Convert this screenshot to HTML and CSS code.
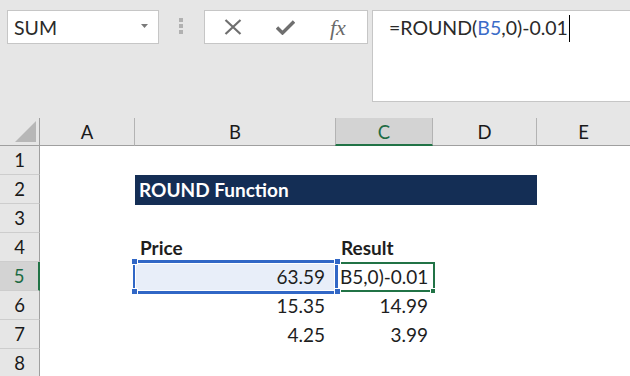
FILE: index.html
```html
<!DOCTYPE html>
<html>
<head>
<meta charset="utf-8">
<link rel="stylesheet" href="styles.css">
</head>
<body>
<div class="app">
  <div class="toolbar">
    <div class="namebox">
      <span class="nb-text">SUM</span>
      <svg class="nb-arrow" width="7" height="4" viewBox="0 0 7 4"><polygon points="0,0 7,0 3.5,4" fill="#7a7a7a"/></svg>
    </div>
    <div class="grip"><i></i><i></i><i></i></div>
    <div class="fbuttons">
      <svg class="ic-x" width="18" height="16" viewBox="0 0 18 16"><path d="M1.5 1 L16.5 15 M16.5 1 L1.5 15" stroke="#6f6f6f" stroke-width="2.2" fill="none"/></svg>
      <svg class="ic-check" width="19" height="15" viewBox="0 0 19 15"><path d="M1 7.5 L6.5 13 L18 1.5" stroke="#6f6f6f" stroke-width="3.4" fill="none"/></svg>
      <span class="ic-fx">fx</span>
    </div>
    <div class="formula">
      <span class="ftext">=ROUND(<span class="ref">B5</span>,0)-0.01</span><span class="caret"></span>
    </div>
  </div>
  <div class="sheet">
    <div class="corner"><span class="tri"></span></div>
    <div class="ch">A</div>
    <div class="ch">B</div>
    <div class="ch ch-sel">C</div>
    <div class="ch">D</div>
    <div class="ch ch-last">E</div>

    <div class="rh">1</div>
    <div class="cell"></div><div class="cell"></div><div class="cell"></div><div class="cell"></div><div class="cell"></div>

    <div class="rh">2</div>
    <div class="cell"></div>
    <div class="cell band">ROUND Function</div>
    <div class="cell"></div>

    <div class="rh">3</div>
    <div class="cell"></div><div class="cell"></div><div class="cell"></div><div class="cell"></div><div class="cell"></div>

    <div class="rh">4</div>
    <div class="cell"></div>
    <div class="cell bold">Price</div>
    <div class="cell bold">Result</div>
    <div class="cell"></div><div class="cell"></div>

    <div class="rh rh-sel">5</div>
    <div class="cell"></div>
    <div class="cell num colb b5">63.59
      <span class="sel"></span>
      <span class="h h-tl"></span><span class="h h-bl"></span><span class="h h-tr"></span><span class="h h-br"></span>
    </div>
    <div class="cell c5">B5,0)-0.01<span class="act"></span><span class="ah"></span></div>
    <div class="cell"></div><div class="cell"></div>

    <div class="rh">6</div>
    <div class="cell"></div>
    <div class="cell num colb">15.35</div>
    <div class="cell num">14.99</div>
    <div class="cell"></div><div class="cell"></div>

    <div class="rh">7</div>
    <div class="cell"></div>
    <div class="cell num colb">4.25</div>
    <div class="cell num">3.99</div>
    <div class="cell"></div><div class="cell"></div>

    <div class="rh">8</div>
    <div class="cell"></div><div class="cell"></div><div class="cell"></div><div class="cell"></div><div class="cell"></div>
  </div>
</div>
</body>
</html>
```
FILE: styles.css
```css
html, body {
  margin: 0;
  padding: 0;
}
body {
  width: 630px;
  height: 376px;
  overflow: hidden;
  background: #e6e6e6;
  font-family: Lato, "Open Sans", sans-serif;
  color: #1e1e1e;
}
.app {
  width: 630px;
}
.toolbar {
  height: 118px;
  box-sizing: border-box;
  padding: 10px 0 0 7px;
  display: flex;
  align-items: flex-start;
}
.namebox {
  width: 152px;
  height: 34px;
  box-sizing: border-box;
  background: #fff;
  border: 1px solid #c6c6c6;
  display: flex;
  align-items: center;
  padding: 0 10px 0 6px;
}
.nb-text {
  flex: 1;
  font-size: 19.5px;
  color: #2a2a2a;
  padding-top: 1px;
}
.nb-arrow {
  display: block;
  margin-top: -2px;
}
.grip {
  width: 4px;
  margin: 8px 21px 0 20px;
  display: flex;
  flex-direction: column;
  gap: 2px;
}
.grip i {
  display: block;
  width: 4px;
  height: 4px;
  background: #b1b1b1;
}
.fbuttons {
  width: 164px;
  height: 34px;
  box-sizing: border-box;
  background: #fff;
  border: 1px solid #c6c6c6;
  display: flex;
  align-items: center;
  padding-left: 19px;
}
.ic-x {
  display: block;
}
.ic-check {
  display: block;
  margin-left: 34px;
  margin-top: 1px;
}
.ic-fx {
  margin-left: 35px;
  font-family: "Liberation Serif", serif;
  font-style: italic;
  font-size: 22px;
  color: #6a6a6a;
  margin-top: 1px;
}
.formula {
  margin-left: 4px;
  flex: 1;
  height: 92px;
  box-sizing: border-box;
  background: #fff;
  border: 1px solid #c6c6c6;
  border-right: none;
  padding: 2px 0 0 16px;
  display: flex;
  align-items: flex-start;
}
.ftext {
  font-size: 19.5px;
  line-height: 30px;
  color: #2a2a2a;
  white-space: nowrap;
}
.ref {
  color: #3b6cc8;
}
.caret {
  display: block;
  width: 1px;
  height: 27px;
  background: #000;
  margin-left: 1px;
  margin-top: 2px;
}
.sheet {
  display: grid;
  grid-template-columns: 40px 95px 201px 97px 104px 93px;
  grid-template-rows: 28px repeat(8, 29px);
  background: #fff;
}
.corner {
  background: #e6e6e6;
  border-right: 1px solid #9f9f9f;
  border-bottom: 1px solid #9f9f9f;
  position: relative;
}
.tri {
  position: absolute;
  right: 3px;
  bottom: 3px;
  width: 0;
  height: 0;
  border-left: 21px solid transparent;
  border-bottom: 21px solid #b7b7b7;
}
.ch {
  background: #e6e6e6;
  border-right: 1px solid #b3b3b3;
  border-bottom: 1px solid #9f9f9f;
  display: flex;
  align-items: center;
  justify-content: center;
  font-size: 18.5px;
  color: #1a1a1a;
  padding-top: 1px;
  box-sizing: border-box;
}
.ch-last {
  border-right: none;
}
.ch-sel {
  background: #d3d3d3;
  border-left: 1px solid #b3b3b3;
  margin-left: -1px;
  border-bottom: 2px solid #217346;
  color: #1d6b43;
  padding-top: 2px;
}
.rh {
  background: #e6e6e6;
  border-right: 1px solid #9f9f9f;
  border-bottom: 1px solid #cdcdcd;
  display: flex;
  align-items: center;
  justify-content: center;
  font-size: 18.5px;
  color: #1a1a1a;
  box-sizing: border-box;
}
.rh-sel {
  background: #d3d3d3;
  border-right: 2px solid #217346;
  color: #1d6b43;
}
.cell {
  font-size: 19px;
  line-height: 29px;
  padding: 0 5px 0 5px;
  white-space: nowrap;
  box-sizing: border-box;
}
.band {
  grid-column: span 3;
  background: #142e55;
  color: #fff;
  font-weight: bold;
  padding-left: 4px;
  height: 30px;
}
.bold {
  font-weight: bold;
}
.num {
  text-align: right;
}
.colb {
  padding-right: 11px;
}
.b5 {
  position: relative;
  background: #e8eef9;
  z-index: 2;
}
.sel {
  position: absolute;
  left: -2px;
  top: -2px;
  right: -2px;
  bottom: -3px;
  border: 3px solid #3167c6;
  border-left-width: 2px;
  box-shadow: inset 0 0 0 1px #fff;
}
.h {
  position: absolute;
  width: 5px;
  height: 5px;
  background: #3167c6;
  border: 1px solid #fff;
}
.h-tl { left: -4px; top: -4px; }
.h-bl { left: -4px; bottom: -4px; }
.h-tr { right: -5px; top: -4px; }
.h-br { right: -5px; bottom: -4px; }
.c5 {
  position: relative;
  z-index: 1;
  padding-left: 4px;
}
.act {
  position: absolute;
  left: -1px;
  top: 0;
  right: -2px;
  bottom: -1px;
  border: 2px solid #217346;
}
.ah {
  position: absolute;
  right: -3px;
  bottom: -3px;
  width: 4px;
  height: 4px;
  background: #217346;
  border: 1px solid #fff;
}
```
